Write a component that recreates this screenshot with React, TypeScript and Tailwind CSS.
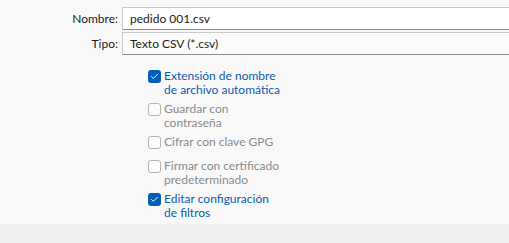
import { Check } from "lucide-react";

type Option = {
  lines: string[];
  checked: boolean;
  mt: string;
};

const OPTIONS: Option[] = [
  { lines: ["Extensión de nombre", "de archivo automática"], checked: true, mt: "mt-0" },
  { lines: ["Guardar con", "contraseña"], checked: false, mt: "mt-[5px]" },
  { lines: ["Cifrar con clave GPG"], checked: false, mt: "mt-[5px]" },
  { lines: ["Firmar con certificado", "predeterminado"], checked: false, mt: "mt-[10px]" },
  { lines: ["Editar configuración", "de filtros"], checked: true, mt: "mt-[5px]" },
];

function Field({ label, value, bg }: { label: string; value: string; bg: string }) {
  return (
    <div className="flex items-center">
      <span className="w-[122px] shrink-0 pr-[4px] text-right text-[12px] text-[#1b1b1b]">
        {label}
      </span>
      <div
        className={`flex h-[23px] flex-1 items-center border border-r-0 border-[#8c8c8c] border-t-[#c9c9c9] border-l-[#c9c9c9] pl-[7px] text-[12px] text-[#1b1b1b] ${bg}`}
      >
        {value}
      </div>
    </div>
  );
}

export default function App() {
  return (
    <div
      className="flex h-[243px] w-[509px] flex-col overflow-hidden bg-[#efefef]"
      style={{ fontFamily: 'Lato, "Noto Sans", sans-serif' }}
    >
      <div className="flex h-[224px] flex-col bg-[#f9f9f9] pt-[7px]">
        <Field label="Nombre:" value="pedido 001.csv" bg="bg-white" />
        <div className="mt-[2px]">
          <Field label="Tipo:" value="Texto CSV (*.csv)" bg="bg-[#fbfbfb]" />
        </div>

        <div className="mt-[14px] flex flex-col pl-[148px]">
          {OPTIONS.map((opt) => (
            <div key={opt.lines[0]} className={`flex items-start ${opt.mt}`}>
              {opt.checked ? (
                <span className="mt-[1px] flex size-[13px] shrink-0 items-center justify-center rounded-[3px] bg-[#005fb8]">
                  <Check className="size-[9px] text-white" strokeWidth={2.5} />
                </span>
              ) : (
                <span className="mt-[1px] size-[13px] shrink-0 rounded-[3px] border border-[#b4b4b4] bg-[#fdfdfd]" />
              )}
              <span
                className={`ml-[3px] text-[12px] leading-[14px] ${
                  opt.checked ? "text-[#0a5cae]" : "text-[#8a8a8a]"
                }`}
              >
                {opt.lines.map((l) => (
                  <span key={l} className="block">
                    {l}
                  </span>
                ))}
              </span>
            </div>
          ))}
        </div>
      </div>
    </div>
  );
}
